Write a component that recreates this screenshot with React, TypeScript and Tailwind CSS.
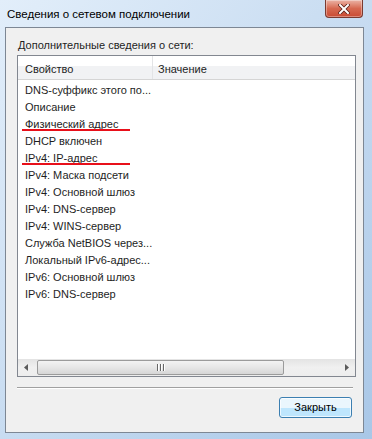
import { useState } from 'react'

const rows = [
  'DNS-суффикс этого по...',
  'Описание',
  'Физический адрес',
  'DHCP включен',
  'IPv4: IP-адрес',
  'IPv4: Маска подсети',
  'IPv4: Основной шлюз',
  'IPv4: DNS-сервер',
  'IPv4: WINS-сервер',
  'Служба NetBIOS через...',
  'Локальный IPv6-адрес...',
  'IPv6: Основной шлюз',
  'IPv6: DNS-сервер',
]

// строки, подчёркнутые красным
const marked = [2, 4]

const App = () => {
  const [selected] = useState<number | null>(null)

  return (
    <div
      className="w-[372px] h-[439px] flex flex-col bg-gradient-to-br from-[#e2eefa] via-[#c8dcf1] to-[#a9c7e7] text-[11px] text-[#1e1e1e]"
      style={{ fontFamily: '"Liberation Sans", Arial, sans-serif' }}
    >
      {/* заголовок окна */}
      <div className="h-[27px] flex items-start justify-between pl-[7px] pr-[9px]">
        <span className="mt-[6px] text-[11.5px] text-black">Сведения о сетевом подключении</span>
        <div className="w-[38px] h-[18px] rounded-b-[4px] border border-t-0 border-[#7a3a30] bg-gradient-to-b from-[#eab3a6] via-[#d66850] to-[#c94a33] flex items-center justify-center shadow-[inset_0_0_0_1px_rgba(255,255,255,0.35)]">
          <svg width="12" height="10" viewBox="0 0 12 10">
            <path d="M2 1 L10 9 M10 1 L2 9" stroke="#5a2018" strokeWidth="3.6" strokeLinecap="square" />
            <path d="M2 1 L10 9 M10 1 L2 9" stroke="#ffffff" strokeWidth="2" strokeLinecap="square" />
          </svg>
        </div>
      </div>

      {/* клиентская область */}
      <div className="ml-[5px] w-[359px] h-[406px] border border-[#7d8794] bg-[#f0f0f0] px-[11px] pt-[10px] flex flex-col">
        <div className="h-[15px] leading-[15px] pl-[1px]">Дополнительные сведения о сети:</div>

        {/* список */}
        <div className="mt-[2px] w-[339px] h-[322px] border border-[#828790] bg-white flex flex-col">
          <div className="h-[24px] flex border-b border-[#d5d5d5] bg-gradient-to-b from-white from-45% to-[#f1f2f4] to-45%">
            <div className="w-[135px] border-r border-[#e3e4e6] pl-[7px] pt-[3px] flex items-center">Свойство</div>
            <div className="flex-1 pl-[5px] pt-[3px] flex items-center">Значение</div>
          </div>

          <div className="flex-1 flex flex-col pt-[2px]">
            {rows.map((r, i) => (
              <div
                key={r}
                className={`relative h-[17px] leading-[17px] pl-[7px] ${selected === i ? 'bg-[#cce8ff]' : ''}`}
              >
                {r}
                {marked.includes(i) && (
                  <div className="absolute left-[4px] top-[13px] w-[108px] h-[2px] bg-[#e8101a]" />
                )}
              </div>
            ))}
          </div>

          {/* горизонтальная прокрутка */}
          <div className="h-[17px] flex bg-gradient-to-b from-[#e3e3e3] via-[#f0f0f0] to-[#ededed]">
            <div className="w-[17px] flex items-center justify-center">
              <svg width="5" height="7" viewBox="0 0 5 7"><path d="M4 0 L0 3.5 L4 7 Z" fill="#5b5b5b" /></svg>
            </div>
            <div className="flex-1 flex py-[1px] pr-[3px]">
              <div className="ml-[2px] w-[247px] h-[15px] rounded-[2px] border border-[#9b9b9b] bg-gradient-to-b from-[#f3f3f3] via-[#e6e6e6] to-[#d6d6d6] flex items-center justify-center">
                <div className="flex gap-[1px]">
                  <div className="w-[2px] h-[7px] bg-[#666] border-r border-white" />
                  <div className="w-[2px] h-[7px] bg-[#666] border-r border-white" />
                  <div className="w-[2px] h-[7px] bg-[#666] border-r border-white" />
                </div>
              </div>
            </div>
            <div className="w-[17px] flex items-center justify-center">
              <svg width="5" height="7" viewBox="0 0 5 7"><path d="M1 0 L5 3.5 L1 7 Z" fill="#5b5b5b" /></svg>
            </div>
          </div>
        </div>

        {/* разделитель */}
        <div className="mt-[10px] w-[336px] h-[2px] border-t border-[#a0a0a0] border-b border-b-white" />

        <div className="mt-[8px] flex justify-end">
          <button className="w-[73px] h-[21px] rounded-[3px] border border-[#3c7fb1] bg-gradient-to-b from-[#eaf6fd] from-50% to-[#bee6fd] to-50% shadow-[inset_0_0_0_1px_rgba(255,255,255,0.7)] text-[11px] text-black">
            Закрыть
          </button>
        </div>
      </div>
    </div>
  )
}

export default App
